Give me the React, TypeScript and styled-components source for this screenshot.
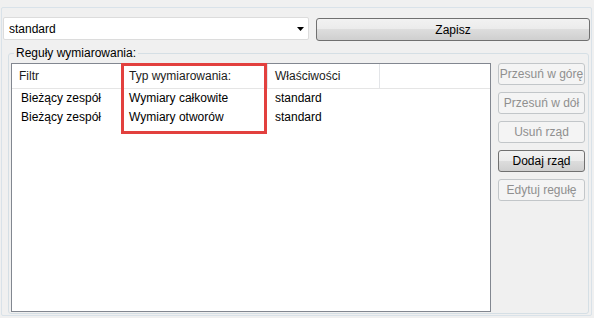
import React from "react";
import styled, { createGlobalStyle } from "styled-components";

const GlobalStyle = createGlobalStyle`
  html, body {
    margin: 0;
    padding: 0;
    background: #f0f0f0;
  }
  body {
    font-family: "Liberation Sans", Arial, sans-serif;
    font-size: 12px;
    color: #000;
  }
`;

const columns = [
  { title: "Filtr", width: 110 },
  { title: "Typ wymiarowania:", width: 146 },
  { title: "Właściwości", width: 112 },
];

const rows = [
  ["Bieżący zespół", "Wymiary całkowite", "standard"],
  ["Bieżący zespół", "Wymiary otworów", "standard"],
];

const sideButtons = [
  { label: "Przesuń w górę", enabled: false },
  { label: "Przesuń w dół", enabled: false },
  { label: "Usuń rząd", enabled: false },
  { label: "Dodaj rząd", enabled: true },
  { label: "Edytuj regułę", enabled: false },
];

const App = () => {
  return (
    <>
      <GlobalStyle />
      <Window>
        <Frame>
          <TopRow>
            <Combo>
              <span>standard</span>
              <svg width="7" height="4" viewBox="0 0 7 4">
                <path d="M0 0 H7 L3.5 4 Z" fill="#000" />
              </svg>
            </Combo>
            <SaveButton>Zapisz</SaveButton>
          </TopRow>
          <GroupBox>
            <Legend>Reguły wymiarowania:</Legend>
            <GroupBody>
              <ListView>
                <HeaderRow>
                  {columns.map((c) => (
                    <HeaderCell key={c.title} $width={c.width}>
                      {c.title}
                    </HeaderCell>
                  ))}
                  <HeaderCell $width={0} $fill />
                </HeaderRow>
                {rows.map((r, i) => (
                  <Row key={i}>
                    {r.map((v, j) => (
                      <Cell key={j} $width={columns[j].width} $first={j === 0}>
                        {v}
                      </Cell>
                    ))}
                  </Row>
                ))}
                <Highlight />
              </ListView>
              <SideButtons>
                {sideButtons.map((b) => (
                  <SideButton key={b.label} disabled={!b.enabled}>
                    {b.label}
                  </SideButton>
                ))}
              </SideButtons>
            </GroupBody>
          </GroupBox>
        </Frame>
      </Window>
    </>
  );
};

const Window = styled.div`
  width: 594px;
  height: 318px;
  box-sizing: border-box;
  padding: 7px 2px 2px 1px;
`;

const Frame = styled.div`
  height: 100%;
  box-sizing: border-box;
  border: 1px solid #d9e2e9;
  border-radius: 2px;
  padding: 9px 1px 1px 1px;
  display: flex;
  flex-direction: column;
`;

const TopRow = styled.div`
  display: flex;
  align-items: flex-start;
  gap: 7px;
`;

const Combo = styled.div`
  width: 306px;
  height: 23px;
  box-sizing: border-box;
  background: #fff;
  border: 1px solid #dcdcdc;
  border-radius: 2px;
  display: flex;
  align-items: center;
  justify-content: space-between;
  padding: 0 4px 0 5px;

  svg {
    margin-top: 1px;
  }
`;

const SaveButton = styled.button`
  flex: 1;
  height: 23px;
  margin-top: 1px;
  box-sizing: border-box;
  border: 1px solid #707070;
  border-radius: 3px;
  background: linear-gradient(#f2f2f2 0%, #ebebeb 50%, #dddddd 50%, #cfcfcf 100%);
  font: inherit;
  color: #000;
  padding: 0;
`;

const GroupBox = styled.fieldset`
  flex: 1;
  min-height: 0;
  margin: 5px 4px 0 5px;
  padding: 2px 3px 1px 2px;
  border: 1px solid #d5dfe5;
  border-radius: 3px;
  display: flex;
  flex-direction: column;
`;

const Legend = styled.legend`
  margin-left: 3px;
  padding: 0 2px;
  line-height: 15px;
`;

const GroupBody = styled.div`
  flex: 1;
  display: flex;
  gap: 7px;
  min-height: 0;
`;

const ListView = styled.div`
  position: relative;
  width: 480px;
  box-sizing: border-box;
  border: 1px solid #828790;
  background: #fff;
`;

const HeaderRow = styled.div`
  display: flex;
  height: 24px;
  border-bottom: 1px solid #e5e5e5;
`;

const HeaderCell = styled.div<{ $width: number; $fill?: boolean }>`
  ${(p) => (p.$fill ? "flex: 1;" : `width: ${p.$width}px;`)}
  box-sizing: border-box;
  padding-left: 7px;
  display: flex;
  align-items: center;
  border-right: ${(p) => (p.$fill ? "none" : "1px solid #e3e5e8")};
  color: #1b1b1b;
`;

const Row = styled.div`
  display: flex;
  height: 19px;
  box-sizing: border-box;
  padding-bottom: 2px;
  align-items: center;
`;

const Cell = styled.div<{ $width: number; $first?: boolean }>`
  width: ${(p) => p.$width}px;
  box-sizing: border-box;
  padding-left: ${(p) => (p.$first ? 9 : 7)}px;
  white-space: nowrap;
`;

const Highlight = styled.div`
  position: absolute;
  left: 109px;
  top: -1px;
  width: 146px;
  height: 71px;
  box-sizing: border-box;
  border: 3px solid #e2403e;
  pointer-events: none;
`;

const SideButtons = styled.div`
  width: 87px;
  display: flex;
  flex-direction: column;
  gap: 7px;
`;

const SideButton = styled.button`
  height: 22px;
  box-sizing: border-box;
  padding: 0;
  font: inherit;
  border-radius: 3px;
  border: 1px solid #707070;
  background: linear-gradient(#f2f2f2 0%, #ebebeb 50%, #dddddd 50%, #cfcfcf 100%);
  color: #000;
  white-space: nowrap;

  &:disabled {
    border-color: #c2c6c9;
    background: #f4f4f4;
    color: #8f8f8f;
  }
`;

export default App;
